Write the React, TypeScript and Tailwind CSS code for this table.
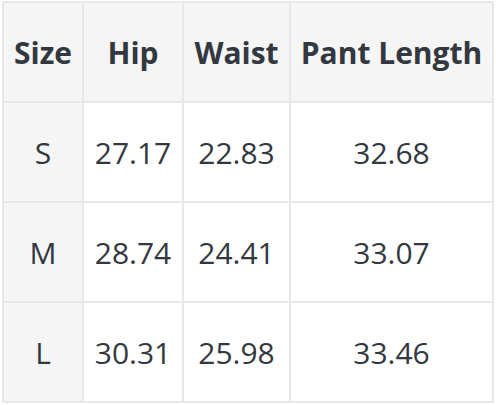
import React from "react";

const header = ["Size", "Hip", "Waist", "Pant Length"];
const rows = [
  ["S", "27.17", "22.83", "32.68"],
  ["M", "28.74", "24.41", "33.07"],
  ["L", "30.31", "25.98", "33.46"],
];
const widths = ["w-[80px]", "w-[100px]", "w-[107px]", "w-[203px]"];

export default function App() {
  return (
    <div className="w-[496px] h-[405px] bg-white pt-[1px] pl-[2px]" style={{ fontFamily: '"Open Sans", sans-serif' }}>
      <div className="inline-flex flex-col border-l-2 border-t-2 border-[#e8e8e8] text-[#333840]">
        <div className="flex">
          {header.map((h, i) => (
            <div
              key={h}
              className={`${widths[i]} h-[100px] flex items-center justify-center border-r-2 border-b-2 border-[#e8e8e8] bg-[#f5f5f5] text-[30px] font-bold`}
            >
              {h}
            </div>
          ))}
        </div>
        {rows.map((r) => (
          <div key={r[0]} className="flex">
            {r.map((c, i) => (
              <div
                key={i}
                className={`${widths[i]} h-[100px] flex items-center justify-center border-r-2 border-b-2 border-[#e8e8e8] text-[30px] ${i === 0 ? "bg-[#f5f5f5]" : "bg-white"}`}
              >
                {c}
              </div>
            ))}
          </div>
        ))}
      </div>
    </div>
  );
}
